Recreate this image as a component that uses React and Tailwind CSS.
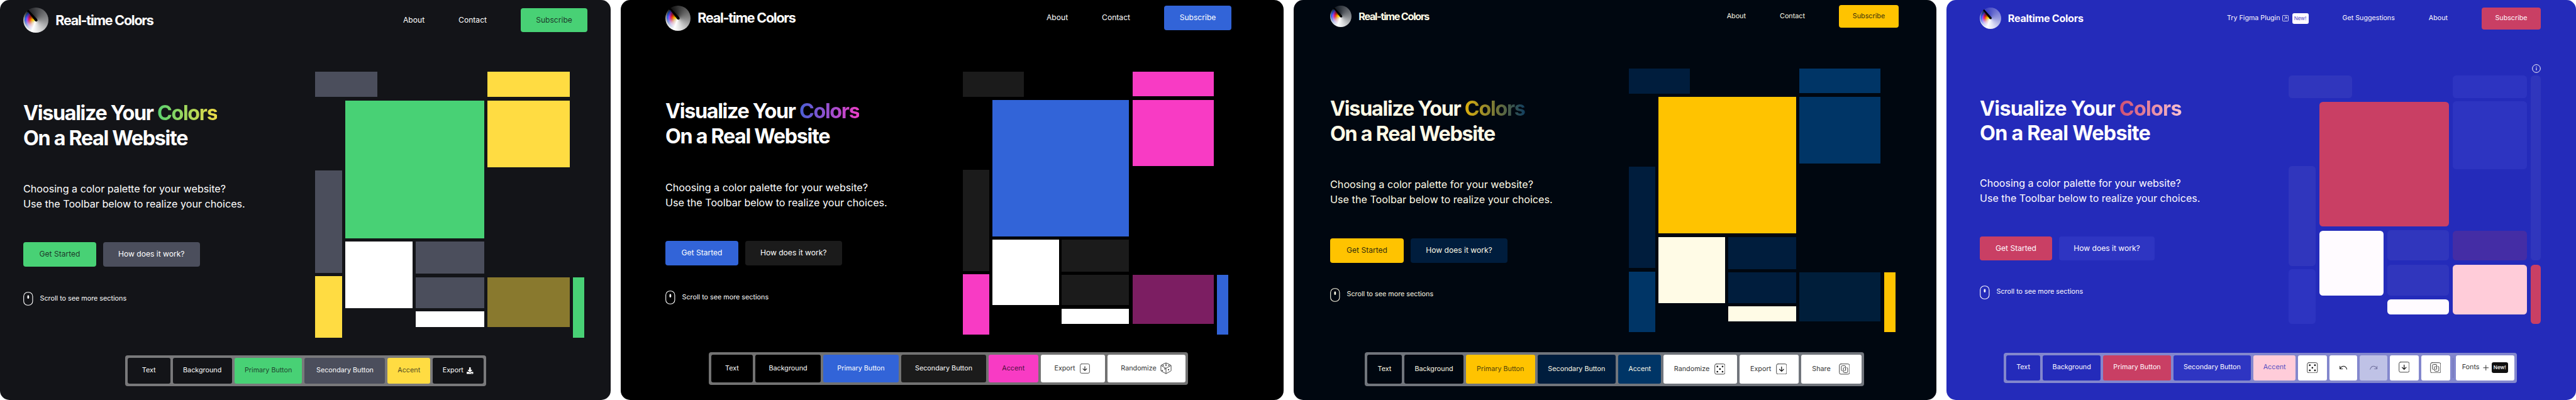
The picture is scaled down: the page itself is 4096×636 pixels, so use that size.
import React from "react";
import { FaDownload } from "react-icons/fa";

function Logo({ size }) {
  return (
    <div className={`relative shrink-0 rounded-full ${size} bg-[conic-gradient(from_315deg,rgba(255,255,255,0.04),rgba(255,255,255,0.2)_45deg,rgba(255,255,255,0.52)_135deg,rgba(255,255,255,0.85)_205deg,#fff_245deg,rgba(255,255,255,0.85)_290deg,rgba(255,255,255,0.3)_360deg)]`}>
      <div className="absolute inset-[4%] rounded-full bg-[radial-gradient(closest-side,#fff200_16%,#ffb400_34%,#ff4a00_50%,#e0186a_63%,#b040f0_76%,#2868ff_90%,#2050c0_100%)] [mask-image:conic-gradient(from_0deg,transparent_200deg,rgba(0,0,0,0.2)_230deg,rgba(0,0,0,0.6)_256deg,#000_276deg,#000_318deg,transparent_318deg)]" />
      <div className="absolute inset-0 rounded-full bg-[conic-gradient(from_0deg,transparent_278deg,rgba(0,0,0,0.6)_318deg,transparent_318deg)]" />
      <svg viewBox="0 0 100 100" className="absolute inset-0 h-full w-full">
        <path d="M16 13.5 L20.500 8.500 L55.500 47 L47.500 54 Z" fill="#000" />
        <circle cx="51.5" cy="50.5" r="5" fill="#000" />
      </svg>
    </div>
  );
}

function IconBox({ className, children }) {
  return (
    <svg viewBox="0 0 26 26" fill="none" stroke="#3c3c3c" strokeLinecap="round" strokeLinejoin="round" className={className}>
      <rect x="1" y="1" width="24" height="24" rx="3.6" strokeWidth="1.4" />
      {children}
    </svg>
  );
}

function DiceIcon({ className = "size-[17.6px]" }) {
  return (
    <IconBox className={className}>
      <g fill="#111" stroke="none">
        <circle cx="7" cy="7" r="2" />
        <circle cx="19.2" cy="7" r="2" />
        <circle cx="13.1" cy="13" r="2" />
        <circle cx="7" cy="19.2" r="2" />
        <circle cx="19.2" cy="19.2" r="2" />
      </g>
    </IconBox>
  );
}

function ExportIcon({ className = "size-[17.6px]" }) {
  return (
    <IconBox className={className}>
      <path d="M13 7.8v10M8.2 13.6l4.8 4.6 4.8-4.6" stroke="#111" strokeWidth="1.8" />
    </IconBox>
  );
}

function ShareIcon({ className = "size-[17.6px]" }) {
  return (
    <IconBox className={className}>
      <path d="M8.4 17.2H8a2.2 2.2 0 0 1-2.2-2.2V7.4A2.2 2.2 0 0 1 8 5.2h5.4a2.2 2.2 0 0 1 2.2 2.2V15" strokeWidth="1.4" />
      <path d="M13.4 9.6h-.6a2.2 2.2 0 0 0-2.2 2.2v7.4a2.2 2.2 0 0 0 2.2 2.2h5.600a2.200 2.200 0 0 0 2.200-2.200v-7.400a2.200 2.200 0 0 0-2.200-2.200M15.600 12v3a2.200 2.200 0 0 1-2.200 2.200" strokeWidth="1.400" />
    </IconBox>
  );
}

function CubeIcon() {
  return (
    <svg viewBox="0 0 24 25" className="h-[19px] w-[18px]" fill="none" stroke="#333" strokeWidth="1.2" strokeLinejoin="round">
      <path d="M12 1 22 5.8q.8.5.8 1.4V17q0 1-.8 1.5L12 24 2 18.5Q1.2 18 1.2 17V7.2q0-.9.8-1.4ZM1.5 6.8 12 12.5 22.5 6.8M12 12.5V24" />
      <g fill="#111" stroke="none">
        <ellipse cx="12" cy="3.9" rx="1.4" ry="1" />
        <ellipse cx="6" cy="6.6" rx="1.4" ry="1" />
        <ellipse cx="12" cy="6.8" rx="1.4" ry="1" />
        <ellipse cx="18" cy="6.6" rx="1.4" ry="1" />
        <ellipse cx="9.6" cy="13.8" rx="1.1" ry="1.4" />
        <ellipse cx="4" cy="17.4" rx="1.1" ry="1.4" />
        <ellipse cx="17.4" cy="15.6" rx="1.2" ry="1.5" />
      </g>
    </svg>
  );
}

function UndoIcon({ className }) {
  return (
    <svg viewBox="0 0 18 10" fill="none" strokeWidth="1.5" strokeLinecap="round" strokeLinejoin="round" className={className}>
      <path d="M1 1.8V7.8H7M1.2 7.6C5.5.2 13.5-.6 17 8.8" />
    </svg>
  );
}

function Mouse({ className }) {
  return (
    <svg viewBox="0 0 16 22" className={className} fill="none">
      <rect x="0.7" y="0.7" width="14.2" height="20.6" rx="6.2" stroke="currentColor" strokeWidth="1.1" />
      <rect x="6.5" y="5.6" width="2.7" height="5.3" rx="1.3" fill="currentColor" />
    </svg>
  );
}

function Nav({ items, p }) {
  return (
    <nav className={`flex items-center gap-[54px] ${p.navText}`}>
      {items}
      <button className={`flex items-center justify-center rounded-[4px] ${p.subscribe} ${p.primary}`}>Subscribe</button>
    </nav>
  );
}

function Mosaic({ p }) {
  const m = p.mosaic;
  return (
    <div className={`flex items-start ${m.root}`}>
      <div className={`flex shrink-0 flex-col ${m.colA}`}>
        <div className={`shrink-0 ${m.r} ${m.a1}`} />
        <div className={`${m.r} ${m.a2}`} />
        <div className={`${m.r} ${m.a3}`} />
      </div>
      <div className={`flex shrink-0 flex-col ${m.colB}`}>
        <div className={`${m.r} ${m.b1}`} />
        <div className="flex items-start justify-between">
          <div className={`${m.r} ${m.b2}`} />
          <div className={`flex flex-col ${m.colBB}`}>
            <div className={`${m.r} ${m.b3}`} />
            <div className={`${m.r} ${m.b4}`} />
            <div className={`${m.r} ${m.b5}`} />
          </div>
        </div>
      </div>
      <div className={`flex shrink-0 flex-col ${m.colC}`}>
        <div className={`${m.r} ${m.c1}`} />
        <div className={`${m.r} ${m.c2}`} />
        {m.cx && <div className={`${m.r} ${m.cx}`} />}
        <div className={`${m.r} ${m.c3}`} />
      </div>
      <div className={`flex shrink-0 flex-col ${m.colD}`}>
        {m.info && (
          <svg viewBox="0 0 14 14" className="size-[14px] self-end text-[#fffbff]" fill="none">
            <circle cx="7" cy="7" r="6.3" stroke="currentColor" strokeWidth="1" />
            <path d="M7 6.2v3.6" stroke="currentColor" strokeWidth="1.2" />
            <circle cx="7" cy="4.5" r="0.75" fill="currentColor" />
          </svg>
        )}
        {m.dx && <div className={`${m.r} ${m.dx}`} />}
        <div className={`${m.r} ${m.d1}`} />
      </div>
    </div>
  );
}

function Panel({ p }) {
  return (
    <section className={`flex h-[636px] shrink-0 flex-col overflow-hidden rounded-[15px] ${p.panel}`}>
      <header className={`flex shrink-0 items-center justify-between ${p.header}`}>
        <div className="flex items-center gap-[11.3px]">
          <Logo size={p.logo} />
          <span className={`font-bold whitespace-nowrap ${p.titleText}`}>{p.title}</span>
        </div>
        <Nav p={p} items={p.nav} />
      </header>
      <main className={`flex shrink-0 items-start justify-between ${p.main}`}>
        <div className={`flex flex-col ${p.left}`}>
          <h1 className={`text-[32.3px] font-bold whitespace-nowrap ${p.h1}`}>
            Visualize Your <span className={`bg-clip-text text-transparent ${p.gradient}`}>Colors</span>
            <br />
            On a Real Website
          </h1>
          <p className={`whitespace-nowrap ${p.para}`}>
            Choosing a color palette for your website?
            <br />
            Use the Toolbar below to realize your choices.
          </p>
          <div className={`flex text-[12.1px] ${p.actions}`}>
            <button className={`rounded-[4px] ${p.get} ${p.primary}`}>Get Started</button>
            <button className={`rounded-[4px] ${p.how} ${p.secondary}`}>How does it work?</button>
          </div>
          <div className={`flex items-center gap-[10.5px] text-[10.77px] ${p.scroll}`}>
            <Mouse className="h-[22px] w-[16px]" />
            <span className="whitespace-nowrap">Scroll to see more sections</span>
          </div>
        </div>
        <Mosaic p={p} />
      </main>
      <div className={`flex shrink-0 items-stretch gap-[4px] self-start rounded-[4px] p-[4px] text-[10.77px] ${p.toolbar}`}>
        {p.tools.map((t, i) =>
          t.divider ? (
            <div key={i} className="my-[4px] -mx-[0.4px] w-[1.4px] bg-[#6f73b4]" />
          ) : (
            <button key={i} className={`flex items-center justify-center rounded-[3px] whitespace-nowrap ${t.c}`}>
              {t.label}
              {t.icon}
            </button>
          )
        )}
      </div>
    </section>
  );
}

const white = "bg-white text-[#333]";

const panels = [
  {
    title: "Real-time Colors",
    panel: "w-[971px] bg-[#131418] text-white",
    header: "h-[64px] pl-[37px] pr-[37px]",
    logo: "size-[40px]",
    titleText: "text-[21.5px] tracking-[-1.25px]",
    navText: "text-[12.1px]",
    nav: [<a key="a">About</a>, <a key="c">Contact</a>],
    subscribe: "h-[38px] w-[106px]",
    primary: "bg-[#48d175] text-[#131418]/85",
    secondary: "bg-[#4b4e5c]",
    main: "h-[501px] pl-[37px] pr-[42px]",
    left: "mt-[96px]",
    h1: "leading-[40.1px] tracking-[-1.33px]",
    gradient: "bg-[linear-gradient(90deg,#48d175_-12%,#ffdc42_112%)]",
    para: "mt-[48px] text-[16.15px] leading-[24.3px]",
    actions: "mt-[48px] gap-[11px]",
    get: "h-[39px] w-[116px]",
    how: "h-[39px] w-[153.5px]",
    scroll: "mt-[40px]",
    toolbar: "ml-[199px] h-[48.5px] bg-[#79797b]",
    mosaic: {
      root: "mt-[50px] w-[428px]",
      r: "",
      colA: "w-[43px]",
      a1: "h-[40px] w-[99px] bg-[#4b4e5c]",
      a2: "mt-[117px] h-[163px] bg-[#4b4e5c]",
      a3: "mt-[5px] h-[98px] bg-[#ffdc42]",
      colB: "ml-[5px] mt-[46px] w-[220.5px]",
      b1: "mb-[5.5px] h-[218.5px] bg-[#48d175]",
      b2: "h-[106px] w-[106.5px] bg-white",
      colBB: "w-[108.5px]",
      b3: "h-[51px] bg-[#4b4e5c]",
      b4: "mt-[5.5px] h-[49.5px] bg-[#4b4e5c]",
      b5: "mt-[5px] h-[25px] bg-white",
      colC: "ml-[5.5px] w-[130.5px]",
      c1: "h-[40px] bg-[#ffdc42]",
      c2: "mt-[6px] h-[106px] bg-[#ffdc42]",
      c3: "mt-[174.5px] h-[79.5px] bg-[#89792e]",
      colD: "ml-[5.5px] w-[18px]",
      d1: "mt-[326.5px] h-[96.5px] bg-[#48d175]",
    },
    tools: [
      { label: "Text", c: "w-[67.5px] bg-[#131418] text-white" },
      { label: "Background", c: "w-[94.3px] bg-[#131418] text-white" },
      { label: "Primary Button", c: "w-[107.7px] bg-[#48d175] text-[#131418]/80" },
      { label: "Secondary Button", c: "w-[128px] bg-[#4b4e5c] text-white" },
      { label: "Accent", c: "w-[67.5px] bg-[#ffdc42] text-[#131418]/80" },
      { label: "Export", c: "w-[80.7px] gap-[5.5px] bg-[#131418] text-white", icon: <FaDownload className="h-[10.5px] w-[10.5px]" /> },
    ],
  },
  {
    title: "Real-time Colors",
    panel: "w-[1054px] bg-black text-white",
    header: "h-[57px] pl-[71px] pr-[83px]",
    logo: "size-[40px]",
    titleText: "text-[21.5px] tracking-[-1.25px]",
    navText: "text-[12.1px]",
    nav: [<a key="a">About</a>, <a key="c">Contact</a>],
    subscribe: "h-[39px] w-[107px]",
    primary: "bg-[#3264d8] text-white",
    secondary: "bg-[#1b1b1b]",
    main: "h-[503px] pl-[71px] pr-[88px]",
    left: "mt-[100px]",
    h1: "leading-[40.1px] tracking-[-1.33px]",
    gradient: "bg-[linear-gradient(90deg,#3264d8_-14%,#f83bc4_108%)]",
    para: "mt-[48.5px] text-[16.15px] leading-[24.3px]",
    actions: "mt-[49px] gap-[10.7px]",
    get: "h-[38.5px] w-[116px]",
    how: "h-[38.5px] w-[154px]",
    scroll: "mt-[40px]",
    toolbar: "ml-[140px] h-[51.7px] bg-[#727272]",
    mosaic: {
      root: "mt-[57px] w-[422.3px]",
      r: "",
      colA: "w-[42px]",
      a1: "h-[40px] w-[97.5px] bg-[#1b1b1b]",
      a2: "mt-[115.5px] h-[161px] bg-[#1b1b1b]",
      a3: "mt-[5px] h-[96.4px] bg-[#f83bc4]",
      colB: "ml-[5.3px] mt-[45px] w-[217.3px]",
      b1: "mb-[5.3px] h-[216.6px] bg-[#3264d8]",
      b2: "h-[104.6px] w-[105.5px] bg-white",
      colBB: "w-[107px]",
      b3: "h-[50.7px] bg-[#1b1b1b]",
      b4: "mt-[5.2px] h-[48.7px] bg-[#1b1b1b]",
      b5: "mt-[5.3px] h-[24.7px] bg-white",
      colC: "ml-[5.6px] w-[129.3px]",
      c1: "h-[39.3px] bg-[#f83bc4]",
      c2: "mt-[6px] h-[105.2px] bg-[#f83bc4]",
      c3: "mt-[172.3px] h-[78.7px] bg-[#7c1e62]",
      colD: "ml-[5px] w-[17.8px]",
      d1: "mt-[322.8px] h-[95px] bg-[#3264d8]",
    },
    tools: [
      { label: "Text", c: "w-[66px] bg-black text-white" },
      { label: "Background", c: "w-[104px] bg-black text-white" },
      { label: "Primary Button", c: "w-[120px] bg-[#3264d8] text-white" },
      { label: "Secondary Button", c: "w-[135px] bg-[#1b1b1b] text-white" },
      { label: "Accent", c: "w-[78.5px] bg-[#f83bc4] text-black/75" },
      { label: "Export", c: `w-[102px] gap-[7px] pr-[2px] ${white}`, icon: <ExportIcon className="size-[16px]" /> },
      { label: "Randomize", c: `w-[124px] gap-[6px] ${white}`, icon: <CubeIcon /> },
    ],
  },
  {
    title: "Real-time Colors",
    panel: "w-[1022px] bg-[#000710] text-[#fffbe6]",
    header: "h-[52px] pl-[58px] pr-[60px]",
    logo: "size-[34px]",
    titleText: "text-[16.16px] tracking-[-1.25px]",
    navText: "text-[10.77px]",
    nav: [<a key="a">About</a>, <a key="c">Contact</a>],
    subscribe: "h-[35.3px] w-[95px]",
    primary: "bg-[#ffc300] text-[#000710]/85",
    secondary: "bg-[#001d3d]",
    main: "h-[508px] pl-[58px] pr-[65px]",
    left: "mt-[101px]",
    h1: "leading-[39.7px] tracking-[-1.27px]",
    gradient: "bg-[linear-gradient(90deg,#ffc300_-16%,#003566_108%)]",
    para: "mt-[48.5px] text-[16.2px] leading-[24.3px]",
    actions: "mt-[49px] gap-[11px]",
    get: "h-[39px] w-[117px]",
    how: "h-[39px] w-[154px]",
    scroll: "mt-[40px]",
    toolbar: "ml-[113px] h-[53.6px] bg-[#71757c]",
    mosaic: {
      root: "mt-[56.7px] w-[424.3px]",
      r: "",
      colA: "w-[42.5px]",
      a1: "h-[40.3px] w-[97.7px] bg-[#001d3d]",
      a2: "mt-[116.3px] h-[161px] bg-[#001d3d]",
      a3: "mt-[5.7px] h-[96px] bg-[#003566]",
      colB: "ml-[5.2px] mt-[45.4px] w-[218.2px]",
      b1: "mb-[5.3px] h-[217.4px] bg-[#ffc300]",
      b2: "h-[105.1px] w-[105.7px] bg-[#fffbe6]",
      colBB: "w-[107.5px]",
      b3: "h-[51px] bg-[#001d3d]",
      b4: "mt-[5px] h-[49.1px] bg-[#001d3d]",
      b5: "mt-[4.8px] h-[24.8px] bg-[#fffbe6]",
      colC: "ml-[5.4px] w-[129.1px]",
      c1: "h-[39.4px] bg-[#003566]",
      c2: "mt-[6px] h-[105.5px] bg-[#003566]",
      c3: "mt-[173.2px] h-[78.7px] bg-[#001e3a]",
      colD: "ml-[5.5px] w-[18.4px]",
      d1: "mt-[324px] h-[95.3px] bg-[#ffc300]",
    },
    tools: [
      { label: "Text", c: "w-[55px] bg-[#000710] text-[#fffbe6]" },
      { label: "Background", c: "w-[94px] bg-[#000710] text-[#fffbe6]" },
      { label: "Primary Button", c: "w-[109.5px] bg-[#ffc300] text-[#000710]/75" },
      { label: "Secondary Button", c: "w-[124.7px] bg-[#001d3d] text-[#fffbe6]" },
      { label: "Accent", c: "w-[68px] bg-[#003566] text-[#fffbe6]" },
      { label: "Randomize", c: `w-[116.8px] gap-[7.5px] pr-[2px] ${white}`, icon: <DiceIcon /> },
      { label: "Export", c: `w-[94.5px] gap-[7.7px] pr-[2px] ${white}`, icon: <ExportIcon className="mb-[1px] size-[17.6px]" /> },
      { label: "Share", c: `w-[95.6px] gap-[13px] pr-[2px] ${white}`, icon: <ShareIcon /> },
    ],
  },
  {
    title: "Realtime Colors",
    panel: "w-[1001px] bg-[#242bba] text-[#fffbff]",
    header: "h-[58px] pl-[53px] pr-[56px]",
    logo: "size-[33.5px]",
    titleText: "text-[16.16px] tracking-[-0.3px]",
    navText: "text-[10.7px]",
    nav: [
      <a key="f" className="flex items-center">
        Try Figma Plugin
        <svg viewBox="0 0 10 10" className="ml-[3px] size-[10px]" fill="none" stroke="currentColor" strokeWidth="0.8">
          <rect x="0.5" y="0.5" width="9" height="9" rx="0.8" />
          <path d="M3 7 7 3M3.8 3H7V6.2" />
        </svg>
        <span className="mt-[1px] ml-[6px] flex h-[17px] w-[26px] items-center justify-center rounded-[3px] bg-[#fffbff] text-[8.1px] text-[#4a42c4]">New!</span>
      </a>,
      <a key="s">Get Suggestions</a>,
      <a key="a">About</a>,
    ],
    subscribe: "h-[35px] w-[94px]",
    primary: "bg-[#c93f64] text-[#fffbff]",
    secondary: "bg-[#2e35c2]",
    main: "h-[502.5px] pl-[53px] pr-[56px]",
    left: "mt-[94.5px]",
    h1: "leading-[39.2px] tracking-[-0.74px]",
    gradient: "bg-[linear-gradient(90deg,#c93f64_-14%,#ffccd9_108%)]",
    para: "mt-[49px] text-[16.05px] leading-[23.8px]",
    actions: "mt-[48.5px] gap-[11px]",
    get: "h-[38px] w-[115px]",
    how: "h-[38px] w-[152px]",
    scroll: "mt-[39.5px]",
    toolbar: "ml-[91px] h-[48px] bg-[#8387cd]",
    mosaic: {
      root: "mt-[61.7px] w-[400.7px]",
      r: "rounded-[5.5px]",
      colA: "w-[43px]",
      a1: "h-[36.5px] w-[100.6px] bg-[#3036bd]",
      a2: "mt-[107.4px] h-[159px] bg-[#3036bd]",
      a3: "mt-[5.7px] h-[87.2px] bg-[#2d34c1]",
      colB: "ml-[5.4px] mt-[42px] w-[206.3px]",
      b1: "mb-[5.3px] h-[198.8px] bg-[#c93f64]",
      b2: "mt-[0.8px] h-[103.4px] w-[102.6px] bg-[#fffbff]",
      colBB: "w-[98.2px]",
      b3: "h-[48.6px] bg-[#3036bd]",
      b4: "mt-[6.5px] h-[49.1px] bg-[#3036bd]",
      b5: "mt-[5.7px] h-[24.3px] bg-[#fffbff]",
      colC: "ml-[5.6px] w-[118.8px]",
      c1: "h-[36.5px] bg-[#2d34c1]",
      c2: "mt-[5.2px] h-[107.5px] bg-[#2d34c1]",
      cx: "mt-[97.8px] h-[47.8px] bg-[#442da5]",
      c3: "mt-[6.5px] h-[79px] bg-[#ffccd9]",
      colD: "-mt-[17.7px] ml-[5.6px] w-[16px]",
      info: true,
      dx: "mt-[3.7px] h-[294.8px] bg-[#3036bd]",
      d1: "mt-[6.5px] h-[94.5px] bg-[#c93f64]",
    },
    tools: [
      { label: "Text", c: "w-[54.2px] bg-[#242bba] text-[#fffbff]" },
      { label: "Background", c: "w-[92px] bg-[#242bba] text-[#fffbff]" },
      { label: "Primary Button", c: "w-[107.7px] bg-[#c93f64] text-[#fffbff]" },
      { label: "Secondary Button", c: "w-[123px] bg-[#2e35c2] text-[#fffbff]" },
      { label: "Accent", c: "w-[67.5px] bg-[#ffccd9] text-[#242bba]/80" },
      { c: "w-[45.4px] bg-white", icon: <DiceIcon className="size-[17.5px]" /> },
      { c: "w-[44.4px] bg-white", icon: <UndoIcon className="h-[7px] w-[12.5px] stroke-[#111]" /> },
      { c: "w-[43.7px] bg-[#bfc2e6]", icon: <UndoIcon className="h-[7px] w-[12.5px] -scale-x-100 stroke-[#6f6f9c]" /> },
      { c: "w-[45.7px] bg-white", icon: <ExportIcon className="mb-[1px] size-[17.5px]" /> },
      { c: "w-[46.4px] bg-white", icon: <ShareIcon className="size-[17.5px]" /> },
      { divider: true },
      {
        label: "Fonts",
        c: `w-[93.1px] gap-[5px] ${white}`,
        icon: (
          <>
            <svg viewBox="0 0 10 10" className="size-[9.5px]" stroke="#333" strokeWidth="1.05">
              <path d="M5 0.5v9M0.5 5h9" />
            </svg>
            <span className="flex h-[16.5px] w-[25.5px] items-center justify-center rounded-[3px] bg-[#101010] text-[8.1px] font-medium text-white">New!</span>
          </>
        ),
      },
    ],
  },
];

export default function App() {
  return (
    <div className="flex h-[636px] w-[4096px] gap-[16px] overflow-hidden bg-white font-['Inter',sans-serif]">
      {panels.map((p, i) => (
        <Panel key={i} p={p} />
      ))}
    </div>
  );
}
